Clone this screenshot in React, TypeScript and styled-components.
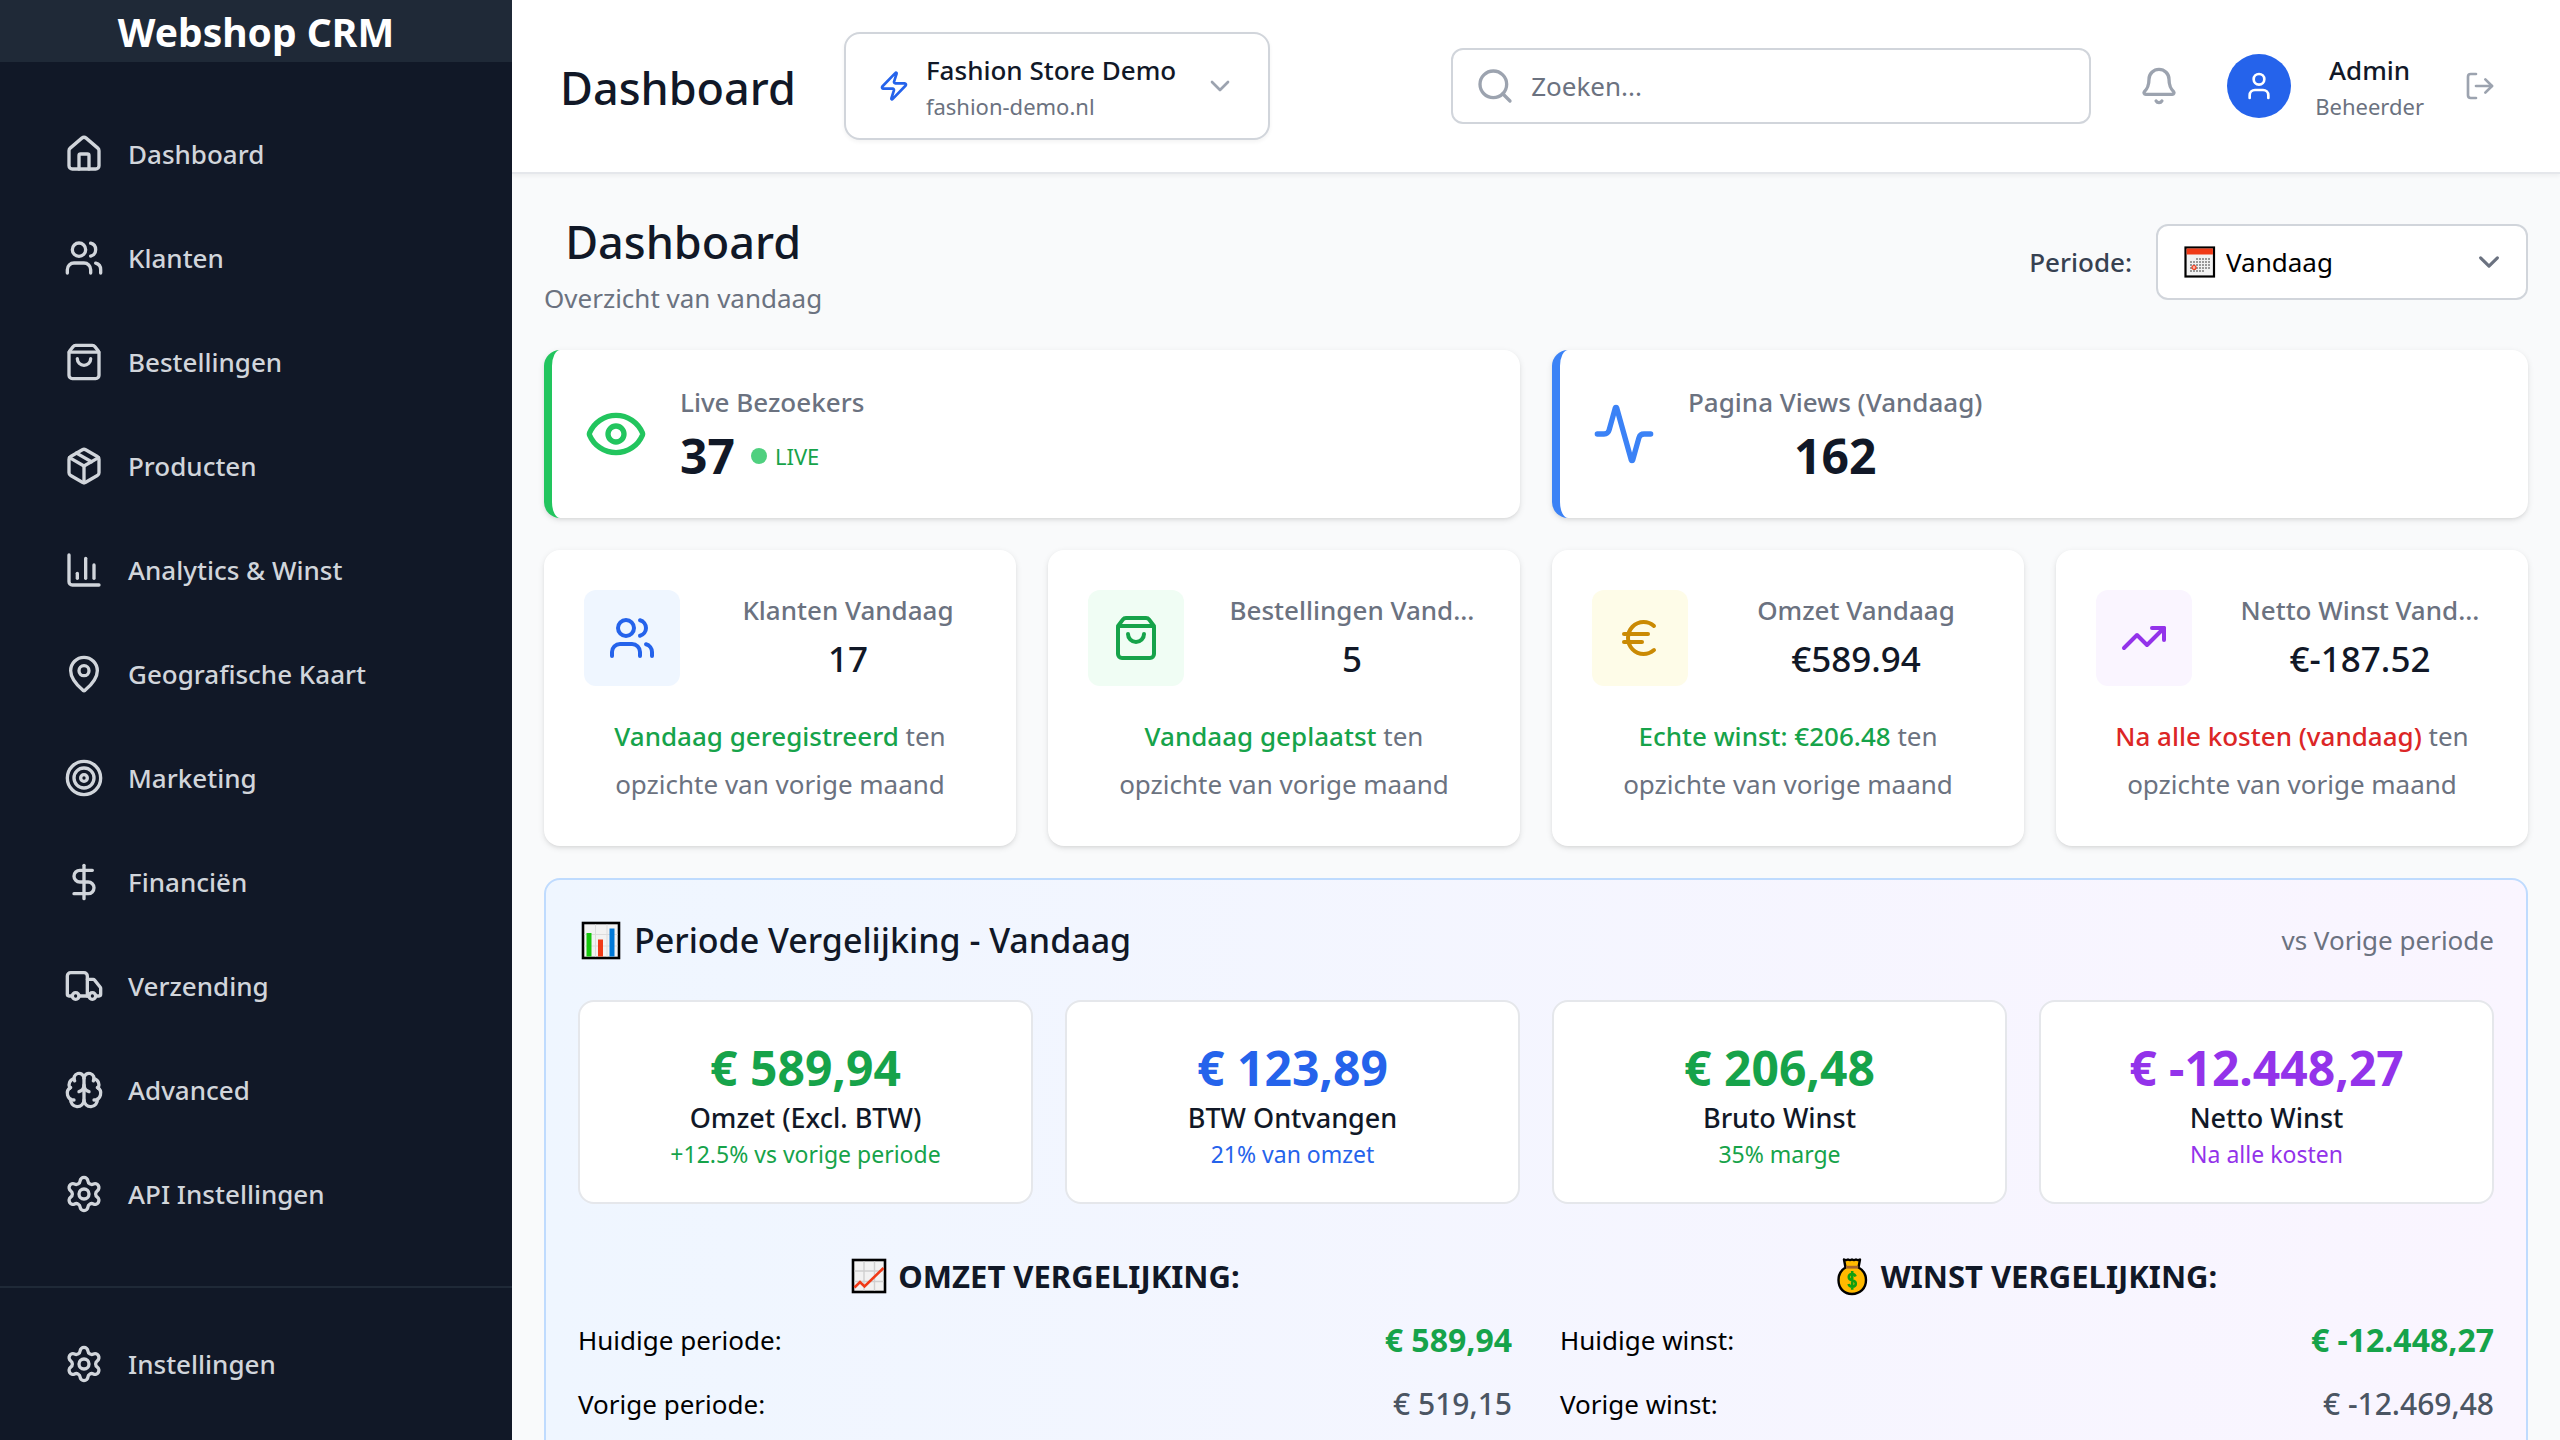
import React from "react";
import styled, { createGlobalStyle } from "styled-components";
import {
  Activity,
  Bell,
  Brain,
  ChartColumn,
  ChevronDown,
  DollarSign,
  Euro,
  Eye,
  House,
  LogOut,
  MapPin,
  Package,
  Search,
  Settings,
  ShoppingBag,
  Target,
  TrendingUp,
  Truck,
  User,
  Users,
  Zap,
  type LucideIcon,
} from "lucide-react";

const color = {
  ink: "#111827",
  inkSoft: "#374151",
  slate: "#4b5563",
  muted: "#6b7280",
  faint: "#9ca3af",
  line: "#d1d5db",
  lineSoft: "#e5e7eb",
  page: "#f9fafb",
  green: "#16a34a",
  blue: "#2563eb",
  purple: "#9333ea",
  red: "#dc2626",
};

const shadow = "0 2px 6px rgba(0, 0, 0, 0.1), 0 2px 4px -2px rgba(0, 0, 0, 0.1)";

const GlobalStyle = createGlobalStyle`
  *, *::before, *::after { box-sizing: border-box; }
  body { margin: 0; background: ${color.page}; }
  body, button, input, select { font-family: "Noto Sans", "Open Sans", sans-serif; }
  h1, h2, h3, p, ul, dl, dd { margin: 0; padding: 0; }
  ul { list-style: none; }
  svg { display: block; flex-shrink: 0; }
`;

const Shell = styled.div`
  display: grid;
  grid-template-columns: 512px minmax(0, 1fr);
  height: 100vh;
  overflow: hidden;
  color: ${color.ink};
  font-size: 26px;
  line-height: 40px;
`;

/* Sidebar */

const Sidebar = styled.aside`
  display: flex;
  flex-direction: column;
  background: ${color.ink};
`;

const Brand = styled.h1`
  padding: 4px 0 2px;
  background: #1f2937;
  color: #fff;
  font-size: 39px;
  font-weight: 700;
  line-height: 56px;
  text-align: center;
`;

const Nav = styled.nav`
  flex: 1;
  padding: 56px 32px 0;
`;

const NavList = styled.ul`
  display: flex;
  flex-direction: column;
  gap: 32px;
`;

const NavLink = styled.a`
  display: flex;
  align-items: center;
  gap: 24px;
  padding: 16px 32px;
  border-radius: 12px;
  color: ${color.line};
  font-weight: 500;
  text-decoration: none;
`;

const SidebarFooter = styled.div`
  padding: 40px 32px;
  border-top: 2px solid #1f2937;
`;

/* Top bar */

const Content = styled.div`
  display: flex;
  flex-direction: column;
  min-width: 0;
  overflow: hidden;
`;

const TopBar = styled.header`
  display: flex;
  align-items: center;
  justify-content: space-between;
  flex-shrink: 0;
  padding: 32px 48px;
  border-bottom: 2px solid ${color.lineSoft};
  background: #fff;
  box-shadow: 0 2px 4px rgba(0, 0, 0, 0.05);
`;

const TopGroup = styled.div`
  display: flex;
  align-items: center;
  gap: 48px;
`;

const Title = styled.h2`
  padding-top: 4px;
  font-size: 45px;
  font-weight: 500;
  line-height: 64px;
`;

const StoreButton = styled.button`
  display: flex;
  align-items: center;
  gap: 16px;
  padding: 16px 32px;
  border: 2px solid ${color.line};
  border-radius: 16px;
  background: #fff;
  box-shadow: 0 2px 4px rgba(0, 0, 0, 0.05);
  color: ${color.blue};
  text-align: left;

  svg:last-child {
    margin-left: 12px;
    color: ${color.faint};
  }
`;

const TwoLines = styled.span<{ $center?: boolean }>`
  display: flex;
  flex-direction: column;
  text-align: ${(p) => (p.$center ? "center" : "left")};
`;

const LineName = styled.span`
  color: ${color.ink};
  font-size: 26px;
  font-weight: 500;
  line-height: 40px;
`;

const LineSub = styled.span`
  color: ${color.muted};
  font-size: 22px;
  line-height: 32px;
`;

const SearchField = styled.label`
  display: flex;
  align-items: center;
  gap: 16px;
  width: 640px;
  padding: 16px 22px;
  border: 2px solid ${color.line};
  border-radius: 12px;
  color: ${color.faint};
`;

const SearchInput = styled.input`
  flex: 1;
  min-width: 0;
  height: 40px;
  padding: 0;
  border: 0;
  outline: 0;
  background: none;
  color: ${color.ink};
  font-size: 26px;

  &::placeholder {
    color: ${color.muted};
    opacity: 1;
  }
`;

const IconButton = styled.button<{ $pad?: number }>`
  padding: ${(p) => p.$pad ?? 0}px;
  border: 0;
  background: none;
  color: ${color.faint};
`;

const Account = styled.div`
  display: flex;
  align-items: center;
  gap: 24px;
`;

const Avatar = styled.span`
  display: grid;
  place-items: center;
  width: 64px;
  height: 64px;
  border-radius: 50%;
  background: ${color.blue};
  color: #fff;
`;

/* Page */

const Page = styled.main`
  display: flex;
  flex-direction: column;
  gap: 32px;
  padding: 32px;
`;

const PageHead = styled.div`
  display: flex;
  align-items: center;
  justify-content: space-between;
`;

const PageTitle = styled.div`
  display: flex;
  flex-direction: column;
  gap: 4px;
  text-align: center;
`;

const Muted = styled.p`
  color: ${color.muted};
`;

const PeriodField = styled.div`
  display: flex;
  align-items: center;
  gap: 24px;
`;

const PeriodLabel = styled.label`
  color: ${color.inkSoft};
  font-weight: 500;
`;

const SelectBox = styled.div`
  position: relative;
`;

const Select = styled.select`
  appearance: none;
  width: 372px;
  height: 76px;
  padding: 0 80px 0 68px;
  border: 2px solid ${color.line};
  border-radius: 12px;
  background: #fff;
  color: #000;
  font-size: 26px;
`;

const SelectMark = styled.span<{ $end?: boolean }>`
  position: absolute;
  top: 0;
  bottom: 0;
  ${(p) => (p.$end ? "right: 18px;" : "left: 28px;")}
  display: flex;
  align-items: center;
  pointer-events: none;
`;

const CardGrid = styled.section<{ $cols: number }>`
  display: grid;
  grid-template-columns: repeat(${(p) => p.$cols}, minmax(0, 1fr));
  gap: 32px;
`;

const LiveCard = styled.article<{ $accent: string }>`
  display: flex;
  align-items: center;
  gap: 32px;
  padding: 32px;
  border-left: 8px solid ${(p) => p.$accent};
  border-radius: 16px;
  background: #fff;
  box-shadow: ${shadow};

  > svg {
    color: ${(p) => p.$accent};
  }
`;

const LiveBody = styled.div<{ $center?: boolean }>`
  display: flex;
  flex-direction: column;
  align-items: ${(p) => (p.$center ? "center" : "flex-start")};
`;

const CardLabel = styled.p`
  color: ${color.muted};
  font-weight: 500;
  white-space: nowrap;
`;

const LiveValue = styled.div`
  display: flex;
  align-items: center;
  gap: 16px;
  padding-top: 4px;
  font-size: 48px;
  font-weight: 700;
  line-height: 60px;
`;

const LiveTag = styled.span`
  display: flex;
  align-items: center;
  gap: 8px;
  color: ${color.green};
  font-size: 22px;
  font-weight: 400;
  line-height: 32px;

  &::before {
    content: "";
    width: 16px;
    height: 16px;
    border-radius: 50%;
    background: #4fd07f;
  }
`;

const StatCard = styled.article`
  padding: 40px 40px 38px;
  border-radius: 16px;
  background: #fff;
  box-shadow: ${shadow};
`;

const StatTop = styled.div`
  display: grid;
  grid-template-columns: 96px minmax(0, 1fr);
  gap: 40px;
  text-align: center;
`;

const StatIcon = styled.span<{ $fg: string; $bg: string }>`
  display: grid;
  place-items: center;
  height: 96px;
  border-radius: 12px;
  background: ${(p) => p.$bg};
  color: ${(p) => p.$fg};
`;

const StatValue = styled.p`
  padding-top: 2px;
  font-size: 35px;
  font-weight: 500;
  line-height: 54px;
`;

const StatNote = styled.p`
  margin-top: 26px;
  color: ${color.muted};
  line-height: 48px;
  text-align: center;
`;

const Emphasis = styled.span<{ $fg: string }>`
  color: ${(p) => p.$fg};
  font-weight: 500;
`;

/* Comparison panel */

const Panel = styled.section`
  padding: 32px;
  border: 2px solid #bfdbfe;
  border-radius: 16px;
  background: linear-gradient(to right, #eff6ff, #faf5ff);
`;

const PanelHead = styled.div`
  display: flex;
  align-items: center;
  justify-content: space-between;
  margin-bottom: 32px;
`;

const PanelTitle = styled.h3`
  display: flex;
  align-items: center;
  gap: 8px;
  font-size: 34px;
  font-weight: 500;
  line-height: 56px;
`;

const SumCard = styled.article`
  padding: 32px;
  border: 2px solid ${color.lineSoft};
  border-radius: 16px;
  background: #fff;
  text-align: center;
`;

const SumValue = styled.p<{ $fg: string }>`
  padding-top: 4px;
  color: ${(p) => p.$fg};
  font-size: 48px;
  font-weight: 700;
  line-height: 60px;
`;

const SumLabel = styled.p`
  font-size: 27px;
  font-weight: 500;
`;

const SumNote = styled.p<{ $fg: string }>`
  color: ${(p) => p.$fg};
  font-size: 23px;
  line-height: 32px;
`;

const CompareGrid = styled.div`
  display: grid;
  grid-template-columns: repeat(2, minmax(0, 1fr));
  gap: 48px;
  margin-top: 48px;
`;

const CompareTitle = styled.h3`
  display: flex;
  align-items: center;
  justify-content: center;
  gap: 8px;
  margin-bottom: 16px;
  font-size: 31px;
  font-weight: 700;
  line-height: 48px;
  text-transform: uppercase;
`;

const CompareList = styled.dl`
  display: flex;
  flex-direction: column;
  gap: 16px;
`;

const CompareRow = styled.div`
  display: flex;
  align-items: center;
  justify-content: space-between;
  color: #000;
  line-height: 48px;
`;

const CompareValue = styled.dd<{ $strong?: boolean }>`
  color: ${(p) => (p.$strong ? color.green : color.slate)};
  font-size: ${(p) => (p.$strong ? 32 : 30)}px;
  font-weight: ${(p) => (p.$strong ? 700 : 500)};
`;

/* Pictograms */

const BarsPicture = () => (
  <svg width="48" height="48" viewBox="0 -1 48 48" aria-hidden="true">
    <rect x="5" y="6" width="36" height="35" fill="#f2f2f2" stroke="#000" strokeWidth="2.6" />
    <path d="M17.500 7.500v32M29 7.500v32M6.500 17.500h33M6.500 29h33" stroke="#dcdcdc" strokeWidth="1" />
    <path d="M11 16v23.500" stroke="#16c60c" strokeWidth="5" />
    <path d="M22.500 22.500v17" stroke="#f03a17" strokeWidth="5" />
    <path d="M34 11.500v28" stroke="#0078d7" strokeWidth="5" />
  </svg>
);

const TrendPicture = () => (
  <svg width="40" height="40" viewBox="0 0 40 40" aria-hidden="true">
    <rect x="3" y="4" width="32" height="32" fill="#f2f2f2" stroke="#000" strokeWidth="2.6" />
    <path d="M14 5.500v29M24.500 5.500v29M4.500 15h29M4.500 25.500h29" stroke="#d0d0d0" strokeWidth="1.4" />
    <path d="M4.500 31.500 10 26l4.500 4.500L33.500 12" fill="none" stroke="#f03a17" strokeWidth="2.6" />
  </svg>
);

const MoneyBagPicture = () => (
  <svg width="36" height="40" viewBox="0 0 36 40" aria-hidden="true">
    <path
      d="M7 3.500q2 1.200 4 0 2 1.200 4 0 2 1.200 4 0 2 1.200 4 0l-1.500 8Q29 15.800 29 24C29 32.500 23 38 15 38S1.500 32.500 1.500 24Q1.500 15.800 8.500 11.500Z"
      fill="#ffb900"
      stroke="#000"
      strokeWidth="2.4"
      strokeLinejoin="round"
    />
    <path d="M9 11.200h12.200" stroke="#a4642c" strokeWidth="2.800" />
    <path
      d="M18.600 20.500q-.8-2.500-3.500-2.500-3.300.2-3.300 3t3.500 3.300q3.500.7 3.500 3.500t-3.500 3q-3 0-3.700-2.800M15.200 15v18.800"
      fill="none"
      stroke="#10a010"
      strokeWidth="2.600"
    />
  </svg>
);

const CalendarPicture = () => (
  <svg width="32" height="32" viewBox="0 0 32 32" aria-hidden="true">
    <rect x="1.500" y="1.500" width="28.500" height="29" fill="#f2f2f2" stroke="#000" strokeWidth="2.200" />
    <path d="M2.600 5.500h26.300" stroke="#f03a17" strokeWidth="6" />
    <path
      d="M12 13h14.500M6 16h20.500M6 19h20.500M6 22h20.500M6 25h14.500"
      stroke="#999"
      strokeWidth="2"
      strokeDasharray="2 1"
    />
    <circle cx="10" cy="21.500" r="2" fill="#f7b5a8" stroke="#f03a17" strokeWidth="1.200" />
  </svg>
);

/* Data */

const navItems: { label: string; icon: LucideIcon }[] = [
  { label: "Dashboard", icon: House },
  { label: "Klanten", icon: Users },
  { label: "Bestellingen", icon: ShoppingBag },
  { label: "Producten", icon: Package },
  { label: "Analytics & Winst", icon: ChartColumn },
  { label: "Geografische Kaart", icon: MapPin },
  { label: "Marketing", icon: Target },
  { label: "Financiën", icon: DollarSign },
  { label: "Verzending", icon: Truck },
  { label: "Advanced", icon: Brain },
  { label: "API Instellingen", icon: Settings },
];

const stats = [
  { label: "Klanten Vandaag", value: "17", note: "Vandaag geregistreerd", tone: color.green, icon: Users, fg: color.blue, bg: "#eff6ff" },
  { label: "Bestellingen Vand...", value: "5", note: "Vandaag geplaatst", tone: color.green, icon: ShoppingBag, fg: color.green, bg: "#f0fdf4" },
  { label: "Omzet Vandaag", value: "€589.94", note: "Echte winst: €206.48", tone: color.green, icon: Euro, fg: "#ca8a04", bg: "#fefce8" },
  { label: "Netto Winst Vand...", value: "€-187.52", note: "Na alle kosten (vandaag)", tone: color.red, icon: TrendingUp, fg: color.purple, bg: "#faf5ff" },
];

const sums = [
  { value: "€ 589,94", label: "Omzet (Excl. BTW)", note: "+12.5% vs vorige periode", fg: color.green },
  { value: "€ 123,89", label: "BTW Ontvangen", note: "21% van omzet", fg: color.blue },
  { value: "€ 206,48", label: "Bruto Winst", note: "35% marge", fg: color.green },
  { value: "€ -12.448,27", label: "Netto Winst", note: "Na alle kosten", fg: color.purple },
];

const comparisons = [
  {
    title: "Omzet vergelijking:",
    picture: <TrendPicture />,
    rows: [
      ["Huidige periode:", "€ 589,94"],
      ["Vorige periode:", "€ 519,15"],
    ],
  },
  {
    title: "Winst vergelijking:",
    picture: <MoneyBagPicture />,
    rows: [
      ["Huidige winst:", "€ -12.448,27"],
      ["Vorige winst:", "€ -12.469,48"],
    ],
  },
];

export default function App() {
  return (
    <Shell>
      <GlobalStyle />
      <Sidebar>
        <Brand>Webshop CRM</Brand>
        <Nav>
          <NavList>
            {navItems.map(({ label, icon: Icon }) => (
              <li key={label}>
                <NavLink href="#">
                  <Icon size={40} />
                  {label}
                </NavLink>
              </li>
            ))}
          </NavList>
        </Nav>
        <SidebarFooter>
          <NavLink href="#">
            <Settings size={40} />
            Instellingen
          </NavLink>
        </SidebarFooter>
      </Sidebar>

      <Content>
        <TopBar>
          <TopGroup>
            <Title>Dashboard</Title>
            <StoreButton type="button">
              <Zap size={32} />
              <TwoLines>
                <LineName>Fashion Store Demo</LineName>
                <LineSub>fashion-demo.nl</LineSub>
              </TwoLines>
              <ChevronDown size={32} />
            </StoreButton>
          </TopGroup>
          <TopGroup>
            <SearchField>
              <Search size={40} />
              <SearchInput type="text" placeholder="Zoeken..." aria-label="Zoeken" />
            </SearchField>
            <IconButton type="button" aria-label="Meldingen">
              <Bell size={40} />
            </IconButton>
            <Account>
              <Avatar>
                <User size={32} />
              </Avatar>
              <TwoLines $center>
                <LineName>Admin</LineName>
                <LineSub>Beheerder</LineSub>
              </TwoLines>
              <IconButton type="button" $pad={16} aria-label="Uitloggen">
                <LogOut size={32} />
              </IconButton>
            </Account>
          </TopGroup>
        </TopBar>

        <Page>
          <PageHead>
            <PageTitle>
              <Title>Dashboard</Title>
              <Muted>Overzicht van vandaag</Muted>
            </PageTitle>
            <PeriodField>
              <PeriodLabel htmlFor="periode">Periode:</PeriodLabel>
              <SelectBox>
                <Select id="periode" defaultValue="vandaag">
                  <option value="vandaag">Vandaag</option>
                </Select>
                <SelectMark>
                  <CalendarPicture />
                </SelectMark>
                <SelectMark $end>
                  <svg width="42" height="42" viewBox="0 0 20 20" fill="none" aria-hidden="true">
                    <path
                      d="m6 8 4 4 4-4"
                      stroke={color.muted}
                      strokeWidth="1.5"
                      strokeLinecap="round"
                      strokeLinejoin="round"
                    />
                  </svg>
                </SelectMark>
              </SelectBox>
            </PeriodField>
          </PageHead>

          <CardGrid $cols={2}>
            <LiveCard $accent="#22c55e">
              <Eye size={64} />
              <LiveBody>
                <CardLabel>Live Bezoekers</CardLabel>
                <LiveValue>
                  37 <LiveTag>LIVE</LiveTag>
                </LiveValue>
              </LiveBody>
            </LiveCard>
            <LiveCard $accent="#3b82f6">
              <Activity size={64} />
              <LiveBody $center>
                <CardLabel>Pagina Views (Vandaag)</CardLabel>
                <LiveValue>162</LiveValue>
              </LiveBody>
            </LiveCard>
          </CardGrid>

          <CardGrid $cols={4}>
            {stats.map(({ label, value, note, tone, icon: Icon, fg, bg }) => (
              <StatCard key={label}>
                <StatTop>
                  <StatIcon $fg={fg} $bg={bg}>
                    <Icon size={48} />
                  </StatIcon>
                  <div>
                    <CardLabel>{label}</CardLabel>
                    <StatValue>{value}</StatValue>
                  </div>
                </StatTop>
                <StatNote>
                  <Emphasis $fg={tone}>{note}</Emphasis> ten
                  <br />
                  opzichte van vorige maand
                </StatNote>
              </StatCard>
            ))}
          </CardGrid>

          <Panel>
            <PanelHead>
              <PanelTitle>
                <BarsPicture />
                Periode Vergelijking - Vandaag
              </PanelTitle>
              <Muted>vs Vorige periode</Muted>
            </PanelHead>
            <CardGrid as="div" $cols={4}>
              {sums.map((s) => (
                <SumCard key={s.label}>
                  <SumValue $fg={s.fg}>{s.value}</SumValue>
                  <SumLabel>{s.label}</SumLabel>
                  <SumNote $fg={s.fg}>{s.note}</SumNote>
                </SumCard>
              ))}
            </CardGrid>
            <CompareGrid>
              {comparisons.map((c) => (
                <div key={c.title}>
                  <CompareTitle>
                    {c.picture}
                    {c.title}
                  </CompareTitle>
                  <CompareList>
                    {c.rows.map(([name, value], i) => (
                      <CompareRow key={name}>
                        <dt>{name}</dt>
                        <CompareValue $strong={i === 0}>{value}</CompareValue>
                      </CompareRow>
                    ))}
                  </CompareList>
                </div>
              ))}
            </CompareGrid>
          </Panel>
        </Page>
      </Content>
    </Shell>
  );
}
